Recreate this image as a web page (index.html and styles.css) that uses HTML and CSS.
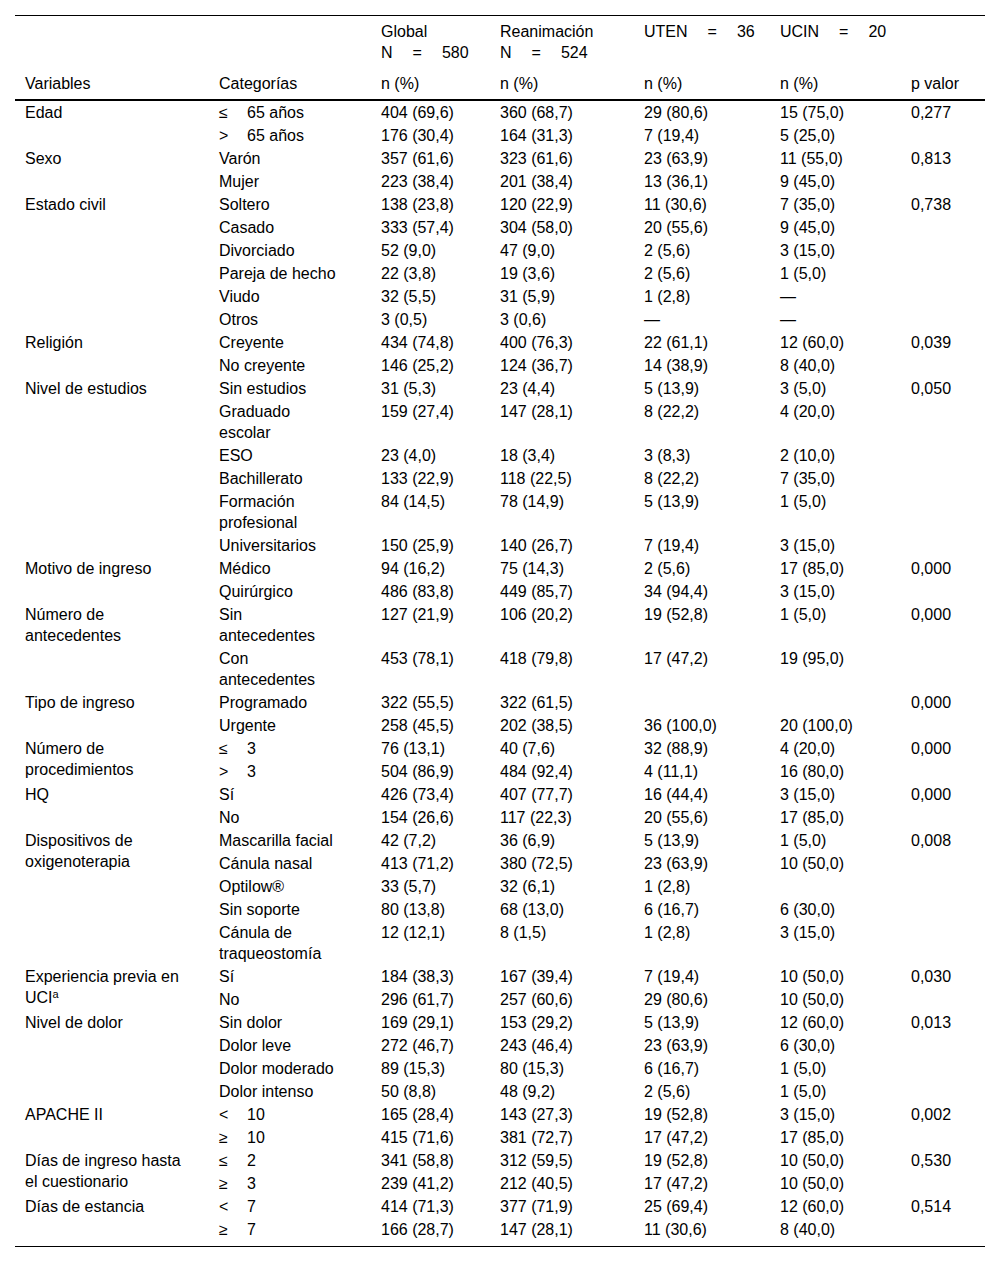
FILE: index.html
```html
<!DOCTYPE html>
<html lang="es">
<head>
<meta charset="utf-8">
<title>Tabla</title>
<link rel="stylesheet" href="styles.css">
</head>
<body>
<table class="data">
<colgroup>
<col class="c1"><col class="c2"><col class="c3"><col class="c4"><col class="c5"><col class="c6"><col class="c7">
</colgroup>
<thead>
<tr class="h1">
<th></th><th></th>
<th>Global<br>N<span class="eq">=</span>580</th>
<th>Reanimación<br>N<span class="eq">=</span>524</th>
<th>UTEN<span class="eq">=</span>36</th>
<th>UCIN<span class="eq">=</span>20</th>
<th></th>
</tr>
<tr class="h2">
<th>Variables</th><th>Categorías</th><th>n (%)</th><th>n (%)</th><th>n (%)</th><th>n (%)</th><th>p valor</th>
</tr>
</thead>
<tbody>
<tr><td rowspan="2">Edad</td><td class="cat"><span class="sym">≤</span>65 años</td><td>404 (69,6)</td><td>360 (68,7)</td><td>29 (80,6)</td><td>15 (75,0)</td><td>0,277</td></tr>
<tr><td class="cat"><span class="sym">&gt;</span>65 años</td><td>176 (30,4)</td><td>164 (31,3)</td><td>7 (19,4)</td><td>5 (25,0)</td><td></td></tr>

<tr><td rowspan="2">Sexo</td><td class="cat">Varón</td><td>357 (61,6)</td><td>323 (61,6)</td><td>23 (63,9)</td><td>11 (55,0)</td><td>0,813</td></tr>
<tr><td class="cat">Mujer</td><td>223 (38,4)</td><td>201 (38,4)</td><td>13 (36,1)</td><td>9 (45,0)</td><td></td></tr>

<tr><td rowspan="6">Estado civil</td><td class="cat">Soltero</td><td>138 (23,8)</td><td>120 (22,9)</td><td>11 (30,6)</td><td>7 (35,0)</td><td>0,738</td></tr>
<tr><td class="cat">Casado</td><td>333 (57,4)</td><td>304 (58,0)</td><td>20 (55,6)</td><td>9 (45,0)</td><td></td></tr>
<tr><td class="cat">Divorciado</td><td>52 (9,0)</td><td>47 (9,0)</td><td>2 (5,6)</td><td>3 (15,0)</td><td></td></tr>
<tr><td class="cat">Pareja de hecho</td><td>22 (3,8)</td><td>19 (3,6)</td><td>2 (5,6)</td><td>1 (5,0)</td><td></td></tr>
<tr><td class="cat">Viudo</td><td>32 (5,5)</td><td>31 (5,9)</td><td>1 (2,8)</td><td>—</td><td></td></tr>
<tr><td class="cat">Otros</td><td>3 (0,5)</td><td>3 (0,6)</td><td>—</td><td>—</td><td></td></tr>

<tr><td rowspan="2">Religión</td><td class="cat">Creyente</td><td>434 (74,8)</td><td>400 (76,3)</td><td>22 (61,1)</td><td>12 (60,0)</td><td>0,039</td></tr>
<tr><td class="cat">No creyente</td><td>146 (25,2)</td><td>124 (36,7)</td><td>14 (38,9)</td><td>8 (40,0)</td><td></td></tr>

<tr><td rowspan="6">Nivel de estudios</td><td class="cat">Sin estudios</td><td>31 (5,3)</td><td>23 (4,4)</td><td>5 (13,9)</td><td>3 (5,0)</td><td>0,050</td></tr>
<tr><td class="cat">Graduado escolar</td><td>159 (27,4)</td><td>147 (28,1)</td><td>8 (22,2)</td><td>4 (20,0)</td><td></td></tr>
<tr><td class="cat">ESO</td><td>23 (4,0)</td><td>18 (3,4)</td><td>3 (8,3)</td><td>2 (10,0)</td><td></td></tr>
<tr><td class="cat">Bachillerato</td><td>133 (22,9)</td><td>118 (22,5)</td><td>8 (22,2)</td><td>7 (35,0)</td><td></td></tr>
<tr><td class="cat">Formación profesional</td><td>84 (14,5)</td><td>78 (14,9)</td><td>5 (13,9)</td><td>1 (5,0)</td><td></td></tr>
<tr><td class="cat">Universitarios</td><td>150 (25,9)</td><td>140 (26,7)</td><td>7 (19,4)</td><td>3 (15,0)</td><td></td></tr>

<tr><td rowspan="2">Motivo de ingreso</td><td class="cat">Médico</td><td>94 (16,2)</td><td>75 (14,3)</td><td>2 (5,6)</td><td>17 (85,0)</td><td>0,000</td></tr>
<tr><td class="cat">Quirúrgico</td><td>486 (83,8)</td><td>449 (85,7)</td><td>34 (94,4)</td><td>3 (15,0)</td><td></td></tr>

<tr><td rowspan="2">Número de antecedentes</td><td class="cat">Sin antecedentes</td><td>127 (21,9)</td><td>106 (20,2)</td><td>19 (52,8)</td><td>1 (5,0)</td><td>0,000</td></tr>
<tr><td class="cat">Con antecedentes</td><td>453 (78,1)</td><td>418 (79,8)</td><td>17 (47,2)</td><td>19 (95,0)</td><td></td></tr>

<tr><td rowspan="2">Tipo de ingreso</td><td class="cat">Programado</td><td>322 (55,5)</td><td>322 (61,5)</td><td></td><td></td><td>0,000</td></tr>
<tr><td class="cat">Urgente</td><td>258 (45,5)</td><td>202 (38,5)</td><td>36 (100,0)</td><td>20 (100,0)</td><td></td></tr>

<tr><td rowspan="2">Número de procedimientos</td><td class="cat"><span class="sym">≤</span>3</td><td>76 (13,1)</td><td>40 (7,6)</td><td>32 (88,9)</td><td>4 (20,0)</td><td>0,000</td></tr>
<tr><td class="cat"><span class="sym">&gt;</span>3</td><td>504 (86,9)</td><td>484 (92,4)</td><td>4 (11,1)</td><td>16 (80,0)</td><td></td></tr>

<tr><td rowspan="2">HQ</td><td class="cat">Sí</td><td>426 (73,4)</td><td>407 (77,7)</td><td>16 (44,4)</td><td>3 (15,0)</td><td>0,000</td></tr>
<tr><td class="cat">No</td><td>154 (26,6)</td><td>117 (22,3)</td><td>20 (55,6)</td><td>17 (85,0)</td><td></td></tr>

<tr><td rowspan="5">Dispositivos de oxigenoterapia</td><td class="cat">Mascarilla facial</td><td>42 (7,2)</td><td>36 (6,9)</td><td>5 (13,9)</td><td>1 (5,0)</td><td>0,008</td></tr>
<tr><td class="cat">Cánula nasal</td><td>413 (71,2)</td><td>380 (72,5)</td><td>23 (63,9)</td><td>10 (50,0)</td><td></td></tr>
<tr><td class="cat">Optilow®</td><td>33 (5,7)</td><td>32 (6,1)</td><td>1 (2,8)</td><td></td><td></td></tr>
<tr><td class="cat">Sin soporte</td><td>80 (13,8)</td><td>68 (13,0)</td><td>6 (16,7)</td><td>6 (30,0)</td><td></td></tr>
<tr><td class="cat">Cánula de traqueostomía</td><td>12 (12,1)</td><td>8 (1,5)</td><td>1 (2,8)</td><td>3 (15,0)</td><td></td></tr>

<tr><td rowspan="2">Experiencia previa en UCI<sup>a</sup></td><td class="cat">Sí</td><td>184 (38,3)</td><td>167 (39,4)</td><td>7 (19,4)</td><td>10 (50,0)</td><td>0,030</td></tr>
<tr><td class="cat">No</td><td>296 (61,7)</td><td>257 (60,6)</td><td>29 (80,6)</td><td>10 (50,0)</td><td></td></tr>

<tr><td rowspan="4">Nivel de dolor</td><td class="cat">Sin dolor</td><td>169 (29,1)</td><td>153 (29,2)</td><td>5 (13,9)</td><td>12 (60,0)</td><td>0,013</td></tr>
<tr><td class="cat">Dolor leve</td><td>272 (46,7)</td><td>243 (46,4)</td><td>23 (63,9)</td><td>6 (30,0)</td><td></td></tr>
<tr><td class="cat">Dolor moderado</td><td>89 (15,3)</td><td>80 (15,3)</td><td>6 (16,7)</td><td>1 (5,0)</td><td></td></tr>
<tr><td class="cat">Dolor intenso</td><td>50 (8,8)</td><td>48 (9,2)</td><td>2 (5,6)</td><td>1 (5,0)</td><td></td></tr>

<tr><td rowspan="2">APACHE II</td><td class="cat"><span class="sym">&lt;</span>10</td><td>165 (28,4)</td><td>143 (27,3)</td><td>19 (52,8)</td><td>3 (15,0)</td><td>0,002</td></tr>
<tr><td class="cat"><span class="sym">≥</span>10</td><td>415 (71,6)</td><td>381 (72,7)</td><td>17 (47,2)</td><td>17 (85,0)</td><td></td></tr>

<tr><td rowspan="2">Días de ingreso hasta el cuestionario</td><td class="cat"><span class="sym">≤</span>2</td><td>341 (58,8)</td><td>312 (59,5)</td><td>19 (52,8)</td><td>10 (50,0)</td><td>0,530</td></tr>
<tr><td class="cat"><span class="sym">≥</span>3</td><td>239 (41,2)</td><td>212 (40,5)</td><td>17 (47,2)</td><td>10 (50,0)</td><td></td></tr>

<tr><td rowspan="2" class="lastvar">Días de estancia</td><td class="cat"><span class="sym">&lt;</span>7</td><td>414 (71,3)</td><td>377 (71,9)</td><td>25 (69,4)</td><td>12 (60,0)</td><td>0,514</td></tr>
<tr class="last"><td class="cat"><span class="sym">≥</span>7</td><td>166 (28,7)</td><td>147 (28,1)</td><td>11 (30,6)</td><td>8 (40,0)</td><td></td></tr>
</tbody>
</table>
</body>
</html>
```

FILE: styles.css
```css
html, body {
  margin: 0;
  padding: 0;
  background: #ffffff;
}

body {
  font-family: "Liberation Sans", Arial, sans-serif;
  font-size: 16px;
  line-height: 21px;
  color: #000000;
}

.data {
  margin: 15px 15px 15px 15px;
  width: 970px;
  table-layout: fixed;
  border-collapse: separate;
  border-spacing: 0;
}

.c1 { width: 194px; }
.c2 { width: 162px; }
.c3 { width: 119px; }
.c4 { width: 144px; }
.c5 { width: 136px; }
.c6 { width: 131px; }
.c7 { width: 84px; }

.data th,
.data td {
  box-sizing: border-box;
  text-align: left;
  vertical-align: top;
  font-weight: normal;
  padding: 1px 10px 1px 10px;
}

.data th {
  padding-top: 5px;
  padding-bottom: 5px;
  white-space: nowrap;
}

.data .h1 th {
  border-top: 1px solid #000000;
}

.data .h2 th {
  border-bottom: 2px solid #000000;
}

.data td:first-child {
  padding-right: 20px;
}

.data td.cat {
  padding-right: 32px;
}

.data .last td,
.data td.lastvar {
  border-bottom: 1px solid #000000;
}

.data .last td {
  padding-bottom: 6px;
}

.eq {
  margin: 0 20px;
}

.sym {
  display: inline-block;
  width: 28px;
}

sup {
  font-size: 11px;
  line-height: 0;
  vertical-align: 5px;
}
```
